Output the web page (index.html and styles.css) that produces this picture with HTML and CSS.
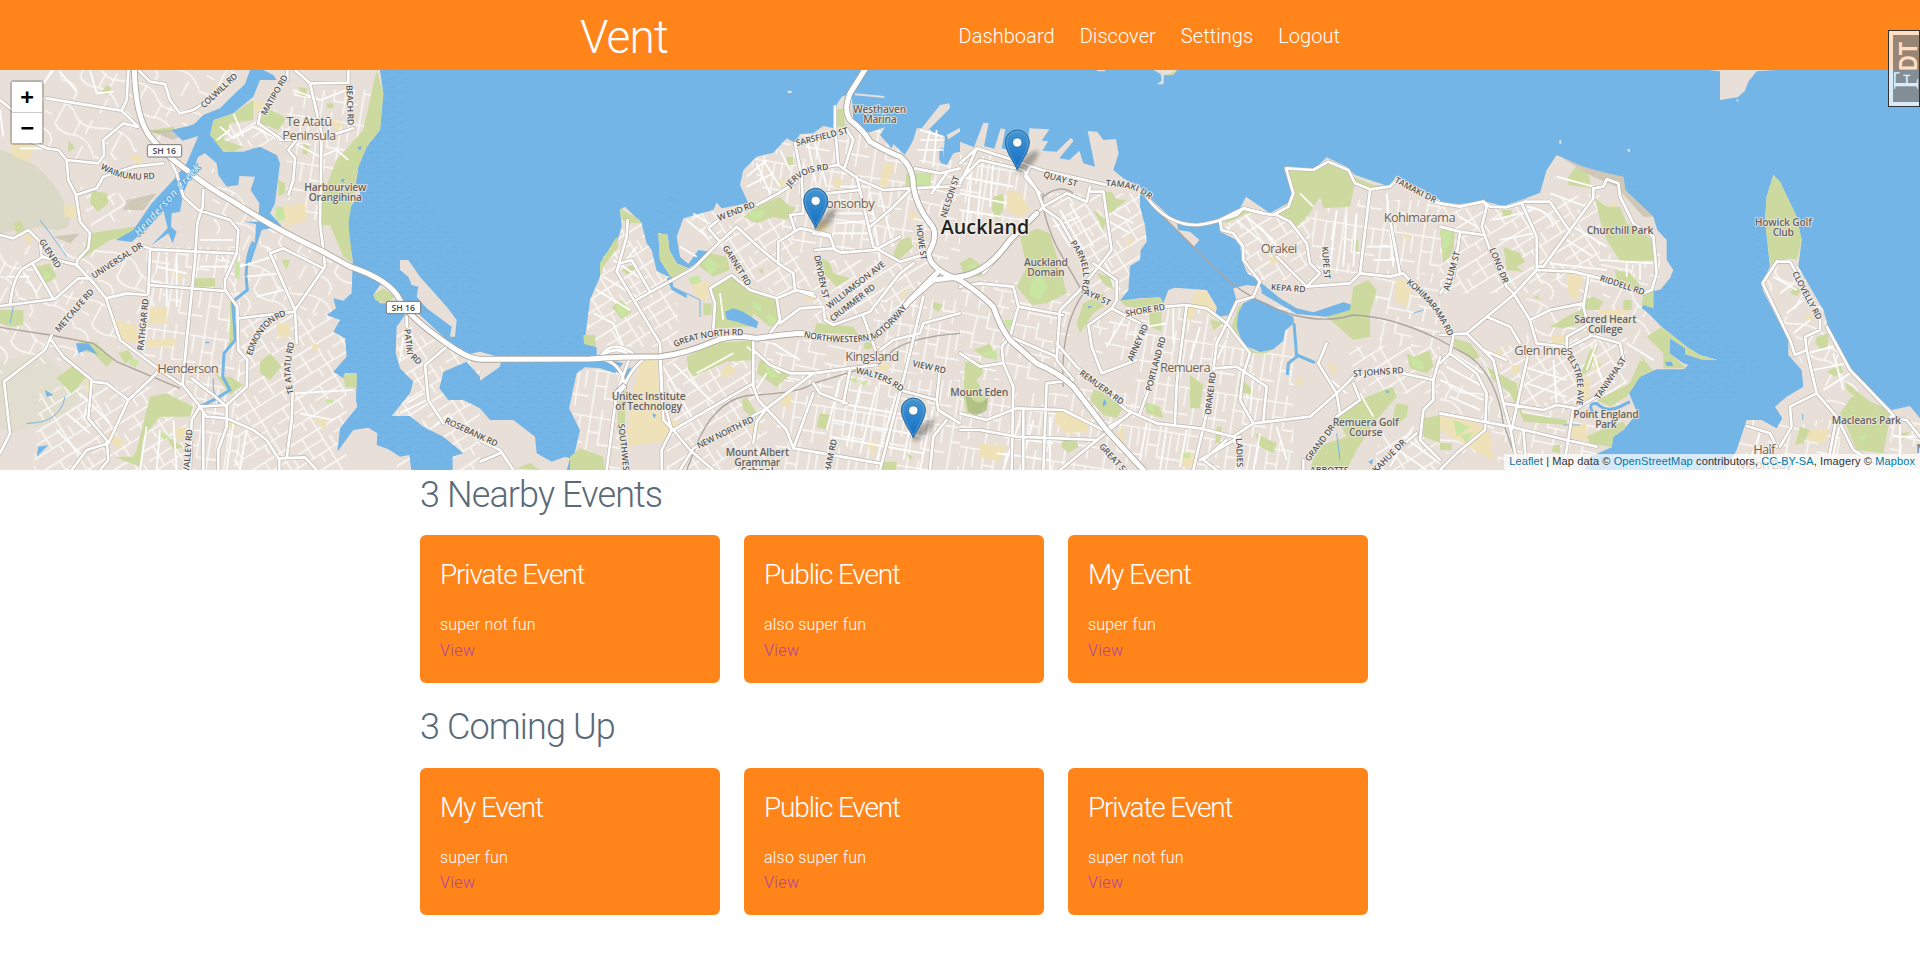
FILE: index.html
```html
<!DOCTYPE html>
<html lang="en">
<head>
<meta charset="utf-8">
<title>Vent</title>
<link rel="stylesheet" href="styles.css">
</head>
<body>
<header class="site-header">
  <div class="header-inner">
    <a class="brand">Vent</a>
    <nav class="nav"><a>Dashboard</a><a>Discover</a><a>Settings</a><a>Logout</a></nav>
  </div>
</header>

<section class="map">
<svg class="map-canvas" width="1920" height="400" viewBox="0 30 5760 1200">
<defs>
  <pattern id="pa" width="150" height="120" patternUnits="userSpaceOnUse" patternTransform="rotate(12)"><path class="lane" d="M0 20H95M60 20V120M0 75H60M95 0V50H150M60 98H150M120 50V98M20 75V120M130 98V120"/></pattern>
  <pattern id="pb" width="130" height="110" patternUnits="userSpaceOnUse" patternTransform="rotate(-32)"><path class="lane" d="M0 15H130M0 48H90M0 82H130M35 15V82M90 0V110M112 48V82M60 82V110"/></pattern>
  <pattern id="pc" width="120" height="140" patternUnits="userSpaceOnUse" patternTransform="rotate(9)"><path class="lane" d="M15 0V140M48 0V105M82 25V140M0 25H120M48 105H120M105 25V80M15 70H48"/></pattern>
  <pattern id="pd" width="190" height="160" patternUnits="userSpaceOnUse" patternTransform="rotate(28)"><path class="lane" d="M0 30Q60 10 90 40T190 30M45 22V90Q70 110 110 95T190 120M110 45V95M0 125Q40 110 60 140V160M140 30V75M150 112V160M0 70H25"/></pattern>
  <path id="l1" d="M0 0H1140V30L1150 100 1140 210 1100 260 1075 320 1068 370 1080 400 1045 450V520L1058 600 1055 700 1030 722 1000 715 1008 745 980 765 1020 780 1000 815 1035 835 1040 890 1000 935 1030 955 1035 940 1070 940 1068 1020 1072 1040 1020 1105 1012 1175 1060 1110 1105 1103 1132 1120 1130 1155 1165 1168 1200 1190 1228 1185 1235 1240H0Z
   M1140 675L1160 665 1185 690 1200 720 1260 765 1340 840 1390 885 1440 875V950L1400 905 1330 935 1318 985 1345 1020 1390 1020 1440 1045V1240H1358V1190L1390 1180 1330 1130 1270 1100 1230 1068 1175 1068 1230 1000 1240 965 1200 925 1187 880 1190 800 1215 765 1190 730 1140 730 1120 705Z
   M1200 600L1225 600 1260 650 1340 740 1370 780 1365 830 1350 830 1355 800 1280 745 1250 710 1255 680 1235 675 1225 650 1200 630Z"/>
  <path id="l2" d="M0 875L65 893 60 920 0 962Z M0 1045L30 1080 100 1080 165 1130 170 1180 215 1205 255 1190 270 1195 258 1240H0Z
   M270 1240L300 1110 267 1045 290 940 315 922 360 925 405 940 430 910 350 890 350 862 312 850 320 800 330 720 360 650 370 590 410 550 425 500 420 450 435 440 485 490 500 550 515 570 530 632 575 655 540 600 535 518 563 525 568 570 590 610 625 625 680 590 670 572 625 612 600 590 590 530 610 475 700 450 710 428 725 445 805 430 780 375 790 330 830 290 880 278 920 235 945 248 960 222 1000 220 1030 197 1060 205 1060 150 1085 110 1115 100 1120 180 1165 218 1215 202 1200 225 1235 265 1240 252 1275 285 1300 240 1310 205 1325 205 1380 135 1408 130 1410 145 1345 210 1395 230 1388 310 1400 316 1420 280 1440 275V1240Z
   M1125 100L1213 108V114L1125 106Z M923 92H935V99H923Z M1400 225L1440 203V215L1405 238Z"/>
  <path id="l3" d="M0 245L42 262 70 188 86 190 72 258 103 266 122 205 136 208 125 265 200 285 208 205 268 208 245 242 265 243 247 272 290 275 332 234 341 242 298 295 328 300 358 272 370 310 405 320 383 213 412 215 430 240 468 237 476 280 460 330 490 355 545 385 540 405 500 415 470 418 455 390 540 392 540 440 556 500 560 545 542 570 540 600 510 618 505 690 480 722 540 715 600 712 610 730 625 690 645 683 740 690 770 740 765 772 810 765 830 725 820 685 860 675 903 680 905 700 1010 762 1100 770 1220 748 1150 727 1060 757 1010 745 960 715 900 665 862 640 845 600 840 545 780 515 778 485 832 460 858 410 930 460 990 425 998 400 975 325 1060 330 1100 292 1160 320 1185 345 1290 380 1305 352 1440 420V1240H0Z
   M565 410L650 488 655 510 690 515 718 540 700 562 615 475Z M580 30H652L632 46 612 45 610 73 590 73 605 62 602 42Z M412 30H435V34H412Z"/>
  <path id="l4" d="M0 430L60 432 130 423 190 438 250 418 300 398 320 330 350 285 430 320 500 340 550 350 556 390 640 470 652 510 680 540V600L700 630 690 655 660 690 640 692V745H610L665 800 740 860 780 885 832 900 790 900 735 882V865L690 835 688 880 730 910 745 915 730 928 650 928 600 950 567 1000 580 1030 592 1060 550 1110 520 1130 515 1162 450 1190 430 1240H0Z
   M850 1240L890 1170 920 1080 965 1080 1010 1105 1027 1075 1005 1040 1040 1010 1090 980 1085 930 1045 885V840L968 690 966 665 990 620 975 480 980 410 1000 345 1020 365 1070 470 1085 540 1075 620 1150 750 1170 820 1230 930 1355 1050 1410 1038 1440 1075V1240Z
   M805 30H1010L950 34 925 65 915 92 893 112 840 120V34Z M358 240L364 241V251H358Z M563 267H570V275H563Z M888 118L897 120 893 126Z"/>
  <clipPath id="c1"><use href="#l1"/></clipPath><clipPath id="c2"><use href="#l2"/></clipPath>
  <clipPath id="c3"><use href="#l3"/></clipPath><clipPath id="c4"><use href="#l4"/></clipPath>

  <g id="minor">
    <path d="M130 70L160 30M180 35L205 65 230 95M270 30L290 100 340 95M140 115Q240 130 365 150M40 120L130 120M0 150L10 230M60 265L130 265M660 200L700 235 760 200 840 240M650 240L690 210M700 160L730 230M880 90L960 120 1040 90M885 250L960 290 1010 270 1045 300M470 620L560 640M500 590V740M530 590V740M600 540H700M600 620H690M720 620L820 590M740 650L840 640M770 710L850 690M800 560L880 730M60 620L110 700M20 650H90M240 1000L330 1090M280 970L250 1080M200 1060L270 1120M170 1110L250 1190M440 1100L420 1230M480 1110L470 1230M520 1080L530 1230M700 1090L680 1230M740 1110L720 1230M880 1000L1060 990M900 1060L1000 1080M1220 1030L1270 1000M1200 1060L1280 1020M1210 830L1200 900M1300 1100L1350 1060"/>
    <path transform="translate(1440)" d="M370 650L470 710M350 690L450 750M400 600L490 660M340 760L400 790 430 860M470 560L410 640M620 480L680 530M640 460L700 500M600 560L650 590M830 310L870 400M850 300L900 380M800 350L860 300M800 380L880 340M900 270L930 330M980 230L1010 380M1000 230L1040 380M1080 380H1180M1050 430H1180M1060 460H1180M1070 490L1200 480M1060 520H1170M1170 400L1200 600M1200 400L1240 560M550 920L640 1080M580 910L700 1030M650 940L760 880M860 940L820 1000M1080 960L1040 1110M1140 980L1100 1160M1190 980L1140 1180M1250 1000L1190 1200M1310 1000L1270 1200M1360 1040L1320 1230M1080 1030L1360 1080M1060 1080L1340 1130M1050 1130L1330 1180M1320 210L1390 230M1320 240H1390M1310 270H1390M1350 210L1330 310M1370 210L1360 320M720 700L730 780M800 860L900 940M880 850L960 900"/>
    <path transform="translate(2880)" d="M40 280L20 500M70 290L50 500M100 300L90 440M0 350L160 380M0 400L140 430M0 450L120 470M270 460L330 560M300 450L370 570M330 430L400 560M280 500L360 470M460 460L520 490M440 480L510 520M430 600L480 690M500 760L440 860M560 800L620 790M680 760L660 900M640 740V850M720 800L690 900M800 840L770 900M800 500L860 580M830 480L920 560M860 470L940 540M900 500L980 590M1020 400L1060 440M1130 450L1110 620M1160 460L1150 620M1190 460L1180 620M1220 560H1300M1240 600H1310M1280 400L1300 620M180 1080L130 1230M220 1080L180 1230M270 1070V1230M130 1130L280 1150M110 1180L270 1200M560 1090L540 1200M620 1100L600 1230M680 1110L660 1220M900 1120L880 1230M950 1100L980 1200M1200 1000L1240 1070M1300 1160L1400 1230M1330 1130L1440 1210M1360 1100L1290 1220M1100 950L1160 1000M880 940L870 1060"/>
    <path transform="translate(4320)" d="M60 470L110 500M160 480L280 450M180 540L280 520M260 440Q330 450 340 500M330 400L440 440M350 350L460 380M380 540L460 590M400 500L500 560M330 610L500 630M480 600L640 610M560 610V650M600 610V660M40 880L130 940M20 920L130 980M0 960L130 1020M30 1010L120 1050M250 920L380 960M260 970L380 1010M340 900L350 1030M470 850L440 930M460 880L500 1000M560 850L640 900M1000 650L1070 690M1020 700L1060 670M1040 760L1090 720M1060 820L1110 780M1100 880L1180 860M1120 930L1220 910M1180 880L1210 990M1380 1080V1220M1360 1130H1430M960 1120L920 1230M1200 1090L1170 1230M1150 990L1230 940"/>
  </g>
  <g id="major">
    <path d="M0 120L50 160M60 230L140 265 175 270 200 300 295 310 312 285 310 240 370 190 410 200M140 115L365 152 415 200M385 30L380 120 365 152M415 30L450 65 495 72 510 120 540 160 580 150 610 130M200 300L205 360 228 405 240 485 270 520 265 565 232 600 230 620M228 405L290 385 310 350 400 320 490 310M505 290L530 340 550 410 595 450 690 480 715 510 710 580 675 660 675 690 712 740 715 870 742 900 740 980 680 1035M610 390L608 440 592 490 585 600 575 700 560 840 548 970M420 555L455 568 700 580M450 570L445 700M0 738L165 717 235 655 270 655 318 715 360 840 420 885 480 930 545 975M318 715L380 700 440 705M448 675L675 693M0 525L40 535 85 510 120 545 125 590 230 615 290 680M30 735Q40 650 70 625L130 590M100 615L160 717M155 825L135 870 12 965 30 1120 0 1180M150 835L190 890 275 960 265 1075 320 1140 325 1200 300 1230M275 965L320 970 385 1020M480 930L385 1020 325 1150 260 1170 215 1230M545 970L600 1040 620 1070 680 1075 760 1110 800 1140 838 1200V1230M575 955L640 1005 680 1040V1100L655 1170V1230M680 1035L600 1040 575 1080 570 1230M610 1060V1230M838 1195L915 1192 950 1230M878 995L875 1080 860 1195M885 30L930 70 1045 68V30M930 70L965 220 960 490 970 570M965 235L1060 205M840 235L775 190 780 160M840 240L890 240 865 270 885 295 880 360 865 405M810 580L850 565 900 590 970 625M970 570L975 620 885 750 810 580M885 750L890 850M885 755L715 775M862 30V60M1220 770V800M1275 915L1340 860 1380 870M1275 915L1285 1020 1330 1090"/>
    <path transform="translate(1440)" d="M0 1140L60 1170 100 1230M0 1205L60 1180M443 480L440 530 410 635 540 850 550 1080 580 1110 630 1170 700 1230M410 635L420 610 455 600 510 695M465 722L640 625 720 545 770 500 840 565 895 610 940 640 945 690 1000 700M720 545L685 505 715 480M830 435L895 400 950 365M945 250L965 350 970 460 930 465 945 510M895 610V545L960 505 1010 515 1050 525M1000 520L1050 530 1065 570 1085 578 1185 570 1260 530M1005 570L1060 565M1065 140V200L1075 315 1040 320M1075 315L1140 360 1210 390 1290 385M1095 200L1120 240 1095 320M1040 400L1140 390M1130 350L1180 560 1260 605 1345 580M1170 500L1230 450 1290 390M1290 385L1440 378M1305 325L1380 340 1440 325M700 805L705 730 690 685 755 645 810 690 890 715 900 780 870 820M890 715L950 690 1005 710M820 840V980L835 1020 920 1110 940 1165 1200 1210M540 890L545 1000 575 1110 545 1170V1230M580 1110L820 970M820 870L870 915 930 940 1000 940 1110 925 1190 915M1000 940L860 1045 640 1165 600 1230M860 1045L830 1085 820 1150M940 1165L1000 1000M1190 880L1150 770M900 790L960 745 1030 740 1035 780 1060 795 1170 755 1260 640 1300 610M1200 870L1240 840 1320 820 1330 790 1440 760M1330 710L1280 920 1200 1230M1110 930L1090 1030M1260 990L1370 1020 1375 1050 1440 1090M1380 930L1370 1020M1400 1080L1360 1130 1350 1230M1000 970L1020 1000 1100 1030M410 1000L380 1230M1355 400L1400 340"/>
    <path transform="translate(2880)" d="M0 310L50 265 190 310 245 330 440 375M50 265L30 310 0 370M0 360L60 300 190 330 230 390 250 440 160 540 70 640M210 320L195 350 240 400M250 440L320 400 380 425 390 380M250 445L300 480 340 550M390 395H430L455 570 360 690 300 750 290 900 340 960M400 610L470 660 470 720 455 745 385 795 395 860 425 940M455 745L540 790M425 940L530 900M0 680L60 670 160 680 175 740 150 830 125 860 130 910 160 980 155 1230M175 740L310 765M150 830L290 890M0 880L60 920 125 910M0 1060L80 1080 170 1045 310 1050 430 1110 500 1070M0 1110L60 1110 170 1130 410 1140M290 850L350 920 500 1050 590 1090 720 1105 820 1130 880 1090 1050 1070 1130 1000 1200 930M340 960L260 970 250 1230M510 1060L300 1230M190 1050V1230M540 1060L580 950M615 740L680 735 740 745 800 790 870 880 850 940 840 1020 880 1090M680 735L650 970 645 1090M800 790L770 850 760 930M760 925L830 920 920 980 910 1080M740 1060L700 1230M825 1130V1150M800 790L830 725 880 710 900 665 850 600V560L820 520 785 510 780 480 850 445 910 460M950 465L990 485 1040 550 1050 610 1080 640 1040 680M1040 680L1170 670 1200 640 1290 650 1330 640 1440 760M1230 390L1200 640M1040 680L950 590M1290 480L1320 640M1330 940L1420 960 1440 890M1420 960V1020L1390 1050 1380 1140 1440 1200M1100 850L1075 910 1130 1000 1140 1060M1180 970L1200 1020 1130 1070M840 1130L720 1200M1030 1200V1230M1370 1120L1240 1230M800 1140L730 1200 770 1230"/>
    <path transform="translate(4320)" d="M0 500L60 515 130 525M140 440L125 500 150 570 200 680 220 700 270 780 290 850 370 860M0 700L40 650 60 520M245 430L290 530V630L220 705 80 820 0 825M140 440L130 425M255 425H330L390 515M460 385L490 380 500 358 535 370 540 410 580 490 640 530 650 640 635 690 610 700M460 385V415L310 620H290M290 630L400 635 480 655M445 655L430 740 450 820M270 780L330 750 430 730M80 820L160 900 190 1030 210 1100 235 1230M80 820L130 870 200 900M140 770L210 800 240 850M265 880L215 1110M0 910L30 880 40 830M30 880L110 940 140 1000 135 1110 50 1180 0 1230M190 1030L310 1050 350 1035 410 1045 470 1010M0 1060L210 1100 380 1140 470 1160M400 1045L370 1230M380 865V830L450 790 450 825 540 850 550 900M390 860L450 830M250 1110L260 1230M1010 605H1050L1070 640M1010 605L968 670 1050 840 1065 885 1100 870 1095 830 1140 810V780M1100 870L1130 1000 1190 1070 1240 1170 1290 1200 1440 1230M1130 1000L1050 1040 1055 1100 1020 1160M920 1098L990 1120 1010 1160M1190 1070L1160 1230M1350 1070L1400 1080 1440 1130M1160 800L1230 930 1360 1065"/>
  </g>
  <g id="coast">
    <path transform="translate(2880)" d="M560 410Q620 495 710 495 750 492 830 465L850 445 910 460 940 465 985 440 1000 400 978 325 1060 330 1105 305 1165 330 1185 370 1230 388 1290 380 1305 365M1420 425L1440 430"/><path transform="translate(4320)" d="M0 430L60 440 130 425 150 440 200 442 255 425"/>
  </g>
  <g id="motor">
    <path d="M403 20Q405 170 450 230 490 280 560 330 620 380 700 425 830 510 960 570L1050 620Q1170 660 1200 720 1225 770 1340 850 1400 895 1440 898L1770 897Q1860 890 1980 890 2060 880 2140 845 2200 820 2270 835 2340 825 2400 820L2500 838 2620 832Q2680 780 2740 710L2810 640"/>
    <path transform="translate(1440)" d="M1160 20L1110 100Q1090 150 1110 180 1150 210 1170 245 1220 275 1260 290 1300 320 1300 380 1310 440 1350 490 1380 520 1345 580 1350 630 1440 660 1500 700 1540 740 1560 800 1590 840L1670 910Q1740 940 1780 980L1880 1110 1990 1230"/>
    <path transform="translate(1440)" d="M430 980L410 1000M1290 720L1360 660 1440 650Q1520 640 1590 540L1670 460"/>
  </g>
  <path id="ramps" d="M1790 895Q1870 900 1875 990M1800 890Q1855 850 1890 890L1850 1000M1940 892Q1890 920 1860 1010M1800 890Q1840 830 1910 890"/>
  <g id="pin">
    <ellipse rx="15" ry="5" transform="translate(10 -8) rotate(-45)" fill="#000" opacity=".3" filter="url(#soft)"/>
    <path d="M0 0C-2-6-12-18-12-28A12 12 0 0 1 12-28C12-18 2-6 0 0Z" fill="url(#pinfill)" stroke="#2e6c97" stroke-width="1"/>
    <path d="M-10.5-28A10.5 10.5 0 0 1 10.5-28C10.5-20 3-9 0-3 -3-9-10.5-20-10.5-28Z" fill="none" stroke="#fff" stroke-opacity=".18"/>
    <circle cy="-27.5" r="4.6" fill="#fff" stroke="#2e6c97" stroke-width=".7"/>
  </g>
  <linearGradient id="pinfill" x2="0" y2="1"><stop stop-color="#4595d1"/><stop offset="1" stop-color="#126fc6"/></linearGradient>
  <filter id="soft" x="-50%" y="-100%" width="200%" height="300%"><feGaussianBlur stdDeviation="2"/></filter>
  <pattern id="wave" width="46" height="30" patternUnits="userSpaceOnUse"><path d="M2 8h14M24 22h14M30 6l5-3 5 3" stroke="#6aacdf" stroke-width="2" fill="none"/></pattern>
  <path id="t1" d="M300 325Q370 370 470 355"/><path id="t2" d="M755 888Q790 780 868 765"/><path id="t3" d="M882 1000Q860 930 885 845"/>
  <path id="t4" d="M2410 832Q2550 860 2630 835 2690 790 2735 724"/><path id="t5" d="M3317 378Q3410 380 3448 420"/><path id="t6" d="M3210 548Q3270 630 3240 700"/>
  <path id="t7" d="M4182 365Q4240 400 4315 434"/><path id="t8" d="M4798 662Q4870 685 4942 710"/><path id="t9" d="M2370 383Q2410 330 2490 330"/><path id="t10" d="M2025 862Q2110 822 2236 826"/>
  <path id="t12" d="M2566 940Q2660 955 2712 1004"/><path id="t13" d="M4218 670Q4310 740 4348 838"/><path id="t14" d="M4700 893Q4745 950 4728 1042"/>
</defs>

<rect y="0" width="5760" height="1260" fill="#73b5e6"/>
<path fill="url(#wave)" d="M1140 30H1230L1200 350 1440 600V1230H1000V400ZM1440 860L1780 810 1790 1230H1440ZM1940 480L2040 370 2030 560 1990 640ZM3400 560L3640 640 3740 560 3700 780 3400 730ZM4740 365L4920 370 5040 720 5290 920 5180 1030 4900 990 4960 700ZM5260 490H5310V660H5260Z"/>
<g fill="#e8e0d8"><use href="#l1"/><use href="#l2" x="1440"/><use href="#l3" x="2880"/><use href="#l4" x="4320"/></g>

<g clip-path="url(#c1)">
  <path fill="#d4d5c0" opacity=".7" d="M0 270Q130 300 190 420T120 500L0 520Z"/><path fill="#dddcc9" opacity=".6" d="M0 900L130 880 260 1000 180 1080 40 1120 0 1100Z"/>
  <path fill="url(#pd)" d="M0 560L420 540 500 700 380 860 0 940ZM130 30H740L560 210 300 320 120 260ZM600 280L780 480 1060 640 1040 760 700 760Z"/>
  <path fill="url(#pb)" d="M120 980H560V1230H100ZM720 760H1040V1230H700ZM240 380L460 420 280 520ZM640 150H860V260H650ZM1190 780L1440 900V1230H1190Z"/>
  <path fill="url(#pc)" d="M440 560H720V1230H560V900H430ZM860 90H1140V480H860Z"/>
</g>
<g transform="translate(1440)"><g clip-path="url(#c2)">
  <path fill="url(#pb)" d="M320 480H570L600 860H320ZM560 900L820 860 880 1230H560ZM600 440L890 420 1000 700 900 720 700 560ZM1000 600L1350 600 1300 740 1000 800Z"/>
  <path fill="url(#pc)" d="M780 240L1300 200V580H940ZM900 960H1440V1230H880ZM1180 720H1440V940H1180ZM280 930H420V1230H280Z"/>
  <path fill="url(#pa)" d="M840 840H1180V960H840ZM1300 300H1440V600H1300Z"/></g></g>
<g transform="translate(2880)"><g clip-path="url(#c3)">
  <path fill="url(#pc)" d="M0 270H200V520H0ZM500 740H1000V1230H560ZM1050 420H1440V640H1060ZM0 1000H540V1230H0Z"/>
  <path fill="url(#pb)" d="M260 400H560V700H400ZM790 460H1050V660H860ZM1160 860H1440V1000H1200ZM1260 1120H1440V1230H1240Z"/>
  <path fill="url(#pa)" d="M0 660H330V960H0ZM400 760L560 780V900L400 900ZM340 900L560 1060 380 1060ZM1240 640H1440V860H1260Z"/></g></g>
<g transform="translate(4320)"><g clip-path="url(#c4)">
  <path fill="url(#pb)" d="M0 440H300V700H0ZM300 420L480 400V620L280 680ZM180 860L560 820V1040H180Z"/>
  <path fill="url(#pd)" d="M0 880H160V1180H0ZM260 640H640V860H260ZM960 620H1130L1300 1000 1180 1060 1080 900Z"/>
  <path fill="url(#pa)" d="M480 580H660V680H480ZM140 1040H480V1230H180ZM860 1080H1200V1230H860ZM1350 1070H1440V1230H1350Z"/></g></g>

<g class="sand">
  <path d="M30 240L115 235 85 305 40 290ZM190 435L230 440V475L195 470ZM385 290L430 285 420 315ZM750 120L800 130 770 160ZM345 780L420 800 415 850 360 840ZM450 740L500 745V790H445ZM430 840L530 835 520 860 440 860ZM845 440L915 430 920 480 860 500ZM830 790H870V830H835ZM520 630L550 650 530 670ZM250 960L275 965 265 995ZM330 1110L375 1150 360 1165 320 1140ZM510 1110L560 1100 550 1150ZM680 1080L710 1095 690 1110ZM935 850L960 855 945 880ZM635 75L670 80 650 100ZM940 1070L985 1080 970 1110ZM70 520L100 530 90 560ZM990 180L1030 190 1010 215Z"/>
  <path transform="translate(1440)" d="M480 900L530 870 540 1060 600 1090 560 1140 440 1160 450 1040ZM630 660L690 670 680 725 650 710ZM1210 310L1245 315 1215 385 1200 375ZM1065 350L1090 360 1080 390 1060 380ZM1005 490L1045 480 1040 520 1010 515ZM720 940L745 910 770 935 730 955ZM900 1010L935 1000 930 1045 905 1035ZM1195 915L1230 905 1225 930 1195 935ZM1270 690H1285L1260 725ZM1285 450L1315 470 1290 480ZM1160 1150L1190 1140 1180 1190ZM980 700H1000V725H975ZM810 1100L840 1080 830 1140ZM890 360L920 355 910 385Z"/>
  <path transform="translate(2880)" d="M290 1040L390 1080 380 1115 320 1120 285 1090ZM60 1150L140 1160 120 1205 60 1190ZM710 690L740 695 770 745 765 770 710 745 690 790 680 760ZM140 390L180 400 210 450 180 475 140 450ZM920 590L970 595 940 615ZM1310 660L1360 660 1340 740 1305 720ZM1100 910L1135 920 1120 945ZM500 530L520 540 505 560ZM490 1090L470 1130 490 1150ZM1010 950L1035 960 1010 980ZM1330 520L1355 530 1340 545ZM660 1175L700 1180V1220H670Z"/>
  <path transform="translate(4320)" d="M380 640L430 650 410 720 385 700ZM470 750L570 750 510 790ZM505 430L530 430 520 465ZM415 960L450 950 450 1010 415 1040ZM335 825H375V850H335ZM385 1100L440 1090 440 1145 390 1130ZM0 1070L60 1065 110 1090 150 1120 160 1200 120 1180 0 1110ZM470 890L485 920 460 935ZM1095 760L1120 765 1105 790ZM1105 1110L1170 1110 1150 1150 1100 1140ZM1250 1110L1285 1120 1265 1165 1240 1150ZM160 875L190 870 180 900ZM215 915H240V940H215Z"/>
</g>
<g class="park">
  <path d="M640 180L700 160 760 120 760 180 690 190 670 240 730 260 700 275 660 270 630 225ZM795 140L860 175 835 210 780 190ZM1130 30L1150 100 1140 210 1100 260 1075 320 1045 490 1058 610 1030 590 990 495H960L970 400 1010 300 1090 210ZM275 390L320 400 325 430 295 455 270 430ZM40 490L60 480 75 510 50 520ZM270 520L400 500 440 520 330 540 240 600ZM110 620L150 610 170 650 140 670ZM0 750H70V795L30 800 0 790ZM585 655H645V680H585ZM705 605H718V655H705ZM780 905L810 880 845 920 810 960 780 940ZM170 955L220 915 260 950 215 1000ZM690 720L708 750 700 850 680 870 690 830ZM410 1170L450 1010 500 1000 580 1040 570 1070 480 1070 430 1130 420 1220 340 1190 400 1190ZM500 1130L550 1160 520 1170ZM1030 945L1070 940V985L1035 980ZM1120 705L1150 685 1185 710 1160 730 1125 720ZM640 935L660 950 690 950 730 975 690 1005ZM895 80L920 85V110L900 105ZM910 250L930 260 920 285 908 280ZM355 880L385 870 400 895 375 910ZM835 360L855 370V400L835 410ZM240 840L290 850 340 900 320 920 280 880 230 870ZM320 75L335 85 320 105 305 95ZM205 240L225 265 205 275ZM450 210L520 200 530 215 460 220ZM980 130H1000V145H980ZM845 600L870 600 860 630ZM800 490L830 490 895 530 860 525Z"/>
  <path transform="translate(1440)" d="M420 445L480 480 482 490 450 490 425 480ZM410 530L415 560 370 620 360 650 360 610ZM535 518L563 525 568 570 590 610 625 625 575 655 540 600ZM425 720L455 755 425 778 395 740ZM310 825H345L348 860 312 852ZM425 630L455 615 465 625 440 645ZM650 600L690 580 740 590 750 630 700 650 660 620ZM690 685L755 645 820 700 890 715 900 790 870 800 820 760 810 800 705 805 705 740ZM620 890L700 850 820 840 815 900 740 905 640 950 625 930ZM790 470L830 440 900 410 930 440 950 440 920 480 880 470 830 490ZM840 895L930 945 890 980 830 940ZM1065 150L1090 145 1095 200H1065ZM1280 340L1355 340 1350 380 1275 380ZM1260 540L1290 530 1300 560 1250 605 1240 580ZM1020 590L1050 610 1060 640 1110 655 1070 680 1030 640ZM1010 790L1120 800 1135 825 1060 820 1000 820ZM785 1020L800 1010 830 1060 820 1075 790 1050ZM1020 1060L1055 1065 1040 1110 1010 1100ZM1155 845L1185 850 1170 870 1150 865ZM1360 725L1390 735 1375 755 1358 745ZM270 1190L300 1165 370 1190 375 1230H270ZM110 1225L150 1210 180 1230ZM920 290L940 290V315H920ZM1210 1205H1250V1230H1205ZM670 730H695V765H670ZM420 960L440 980 430 1180 410 1100ZM835 630L850 625 850 645ZM1280 1180L1300 1190 1290 1200Z"/>
  <path transform="translate(2880)" d="M180 530L230 505 270 520 300 620 320 700 260 730 215 735 170 680 200 620ZM100 410L130 400 130 450 110 480 95 450ZM435 395H455L470 418 500 420 450 460 438 440ZM480 722L600 712 610 730 560 745 500 740ZM370 730L430 700 430 740 400 760 360 820 350 790ZM565 755L605 745V815L570 800ZM400 990L460 1000 490 1040 470 1075 430 1065 390 1020ZM15 905L60 905 70 940 50 960 85 1030 60 1060 20 1060 10 1010ZM310 1130L350 1135 355 1160 325 1180 305 1160ZM690 945L730 975 720 1045 690 1045ZM975 325L1060 335 1105 305 1160 325 1185 370 1170 440 1090 445 1080 410 1050 460 1010 500 950 465 1000 410ZM1180 680L1225 660 1250 690 1230 760 1230 830 1180 840 1100 770 1170 750ZM1180 350L1240 375 1290 375 1240 388 1190 375ZM1270 990L1300 980 1310 1010 1240 1090 1190 1170 1160 1230 1050 1230 1070 1160 1160 1130 1130 1070 1200 1020ZM1310 1030L1345 1035 1340 1070 1305 1100 1300 1060ZM840 955L880 990 880 1005 835 995ZM1340 880L1360 890 1410 870 1420 920 1400 940 1350 925ZM885 1120L950 1150 940 1180 900 1160ZM750 780L800 785 760 810ZM835 740L850 730 830 800 850 855 890 875 970 840 920 880 880 880 830 830 815 800ZM1180 540H1195V575H1180ZM550 1025L600 1040 610 1075 560 1060ZM770 1100H785L780 1150H765ZM1390 1075L1440 1065V1150L1390 1130ZM400 450L440 480 430 510ZM0 610L30 590 75 625 60 650 10 640ZM40 870L90 850 110 900 70 890ZM410 640L450 650 460 690 430 670ZM780 480L850 450 910 458 860 460 800 490ZM620 45L652 30 640 45Z"/>
  <path transform="translate(4320)" d="M385 350L410 320 445 340 455 385 385 375ZM465 415L500 440 540 440 560 490 640 540V602H540L500 540 480 480ZM0 510L45 505 40 580 10 610ZM190 560L240 580 255 605 230 620 250 635 200 630ZM430 720L460 710 490 725 475 750 435 750ZM330 800L380 770 430 745V790L370 805ZM525 630L570 640 605 680 600 700 530 665ZM610 700L640 692V745L605 735ZM620 830L665 800 740 860 780 885 832 900 790 900 735 882V865L690 835 688 880 740 925 670 925 670 880ZM570 970L600 900 640 930 600 950 560 1010 510 1040 470 1020ZM40 835L90 850 120 890 100 900 45 860ZM140 920L230 970 250 1080 210 1000 160 960ZM480 1110L550 1085 560 1100 520 1130 515 1162 450 1150 440 1130ZM1000 345L1020 365 1070 470 1085 540 1070 600 1050 595 990 615 975 480 980 410ZM1060 680L1085 690 1070 708 1050 700ZM1130 830L1165 820 1165 855 1145 870 1125 850ZM1200 1060L1235 1010 1250 1010 1355 1050 1330 1180 1250 1170 1220 1100ZM1160 935L1200 915 1210 935 1185 950ZM1215 965L1310 1040 1280 1040 1220 990ZM1080 1100L1110 1110 1090 1150 1065 1155ZM185 450H215V470H190ZM450 870L475 855 450 930 420 950ZM245 1060L380 1080 380 1095 250 1085ZM340 1155L360 1155V1180L335 1175ZM600 885L630 920 620 930ZM0 1150H35V1170H0ZM280 710L295 705V720ZM1380 1120L1410 1115 1390 1140ZM550 720L575 720V750H550Z"/>
</g>
<g class="pitch">
  <path d="M825 440L850 440 855 480 830 485ZM130 630L155 650 135 660ZM705 605H718V655H705ZM475 1110L510 1130 490 1140ZM400 895L420 905 405 922 385 910ZM978 1018H998V1030H978Z"/>
  <path transform="translate(1440)" d="M625 655L655 645 665 665 635 675ZM1310 340L1350 345 1348 375 1310 372ZM670 610L690 595 720 620 690 645ZM820 725L845 735 840 755 820 745ZM855 770L870 760 895 785 870 795ZM405 740L430 725 450 755 425 772ZM800 460L850 450 850 470 820 480ZM1110 960L1130 950 1130 970ZM1140 965L1165 965 1150 978ZM850 905L895 950 870 955Z"/>
  <path transform="translate(2880)" d="M210 670L240 645 265 680 240 720 210 705ZM560 1040L580 1030 580 1060ZM60 880L110 870 110 900ZM130 780L160 780 145 810ZM1350 890L1390 905 1390 930 1360 920ZM670 1180H690V1195H670ZM20 620L50 610 55 640Z"/>
  <path transform="translate(4320)" d="M5 515L35 510 30 550 10 580ZM40 1080L90 1100 50 1130ZM60 1125L100 1115 80 1150ZM1255 1130L1280 1120 1270 1145ZM475 905L485 915 475 925Z"/>
</g>
<path class="hill" d="M440 210Q560 220 620 165L590 200 520 240ZM380 420L470 400 430 450 370 450ZM160 530L240 520 210 550ZM4680 290L4750 320 4820 340 4870 350 4876 390 4960 470 4930 470 4850 380 4780 350Z"/>
<path class="crater" d="M2895 1000L2905 1055Q2930 1075 2960 1050L2965 1010Q2930 1050 2905 1000Z"/>

<g class="water">
  <path d="M750 30L735 72 700 105 660 145 610 165 580 195 515 210 548 242 595 228 560 310 520 360 455 430 400 510 348 540 395 546 450 495 490 450 503 505 455 555 505 520 518 550 530 515 513 500 515 460 540 455 550 400 595 290 615 280 650 310 655 345 680 380 715 375 718 348 765 350 752 390 778 430 775 485 730 485 768 492 765 545 740 600 752 610 785 510 845 498 810 460 825 430 840 310 830 285 780 260 730 275 670 275 630 225 640 180 700 160 760 110 780 60 830 60 820 45 790 30Z"/>
  <path d="M228 850L265 850 295 885 260 870 235 880ZM135 990L160 1005 140 1010ZM115 1160L145 1155 110 1190ZM1072 262L1086 258 1080 272ZM1022 360L1034 355 1030 370ZM616 845H628V850H616Z"/>
  <path transform="translate(1440)" d="M735 755L760 745 790 755 835 785 830 805 800 795 770 785 740 778ZM560 655L575 650 580 680 620 700 620 715 575 690ZM380 925L430 935 455 920 440 960 420 940ZM655 570L690 575 650 610 625 612ZM516 1060L530 1065 522 1075ZM1378 270L1390 262 1388 315 1378 300Z"/>
  <path transform="translate(2880)" d="M850 730L880 715 920 730 1000 770 1002 790 975 812 970 842 940 868 900 876 850 855 830 800 835 760ZM428 1030L435 1018 440 1030 430 1040ZM384 738H394V744H384ZM1275 990L1290 995 1280 1000ZM1225 1205L1240 1198 1235 1215Z"/>
  <path transform="translate(4320)" d="M610 735L640 745 660 790 640 770 605 745ZM675 905L695 905 700 918 680 918Z"/>
</g>
<g class="stream">
  <path stroke-width="9" d="M760 545Q730 600 742 690L698 725 706 840 672 880 668 950 690 990 650 1015 600 1040M3882 790L3890 890 3865 910 3862 945M3890 885L3945 908M4780 1060Q4760 1030 4790 1030 4820 1060 4860 1040L4890 1025"/>
  <path stroke-width="3" d="M120 480Q180 560 200 590M80 1090Q180 1090 195 1010M40 740L30 790M2060 700L2100 720V770M4270 750L4240 760M5408 1062V1080M4010 1120L4020 1200M4690 1095L4740 1095M640 955V990L660 1040"/>
</g>
<g class="rail"><path d="M0 802L150 825 280 850 350 905 540 985M2060 1230L2100 1130Q2160 1010 2260 1005 2400 1000 2440 970L2640 910 2680 870Q2740 830 2880 820M3130 400Q3120 450 3170 560L3250 700Q3180 800 3190 980M3130 410Q3180 370 3220 400M3480 460L3650 630Q3740 720 3880 765 3980 790 4060 765 4180 770 4320 840L4410 890Q4490 950 4510 1090L4560 1230"/></g>

<use href="#minor" class="minor"/>
<g class="case"><use href="#major"/><use href="#coast"/></g>
<g class="face"><use href="#major"/><use href="#coast"/></g>
<use href="#ramps" class="case"/><use href="#ramps" class="face"/>
<use href="#motor" class="mcase"/><use href="#motor" class="mface"/>

<g class="shield"><rect x="442" y="254" width="103" height="37" rx="5"/><rect x="1159" y="724" width="103" height="37" rx="5"/></g>
<g class="shieldtext"><text x="493" y="281">SH 16</text><text x="1210" y="752">SH 16</text></g>

<g class="road">
  <text><textPath href="#t1" textLength="172">WAIMUMU RD</textPath></text><text><textPath href="#t2" textLength="166">EDMONTON RD</textPath></text><text><textPath href="#t3" textLength="154">TE ATATU RD</textPath></text>
  <text><textPath href="#t4" textLength="352">NORTHWESTERN MOTORWAY</textPath></text><text><textPath href="#t5" textLength="140">TAMAKI DR</textPath></text><text><textPath href="#t6" textLength="154">PARNELL RD</textPath></text><text><textPath href="#t7" textLength="138">TAMAKI DR</textPath></text><text><textPath href="#t8" textLength="140">RIDDELL RD</textPath></text><text><textPath href="#t9" textLength="132">JERVOIS RD</textPath></text><text><textPath href="#t10" textLength="210">GREAT NORTH RD</textPath></text><text><textPath href="#t12" textLength="150">WALTERS RD</textPath></text><text><textPath href="#t13" textLength="206">KOHIMARAMA RD</textPath></text><text><textPath href="#t14" textLength="150">ELSTREE AVE</textPath></text>
  <text transform="translate(612 146) rotate(-43)" textLength="140">COLWILL RD</text>
  <text transform="translate(797 168) rotate(-60)" textLength="135">MATIPO RD</text>
  <text transform="translate(1039 76) rotate(88)" textLength="120">BEACH RD</text>
  <text transform="translate(116 544) rotate(57)" textLength="98">GLEN RD</text>
  <text transform="translate(282 657) rotate(-33)" textLength="178">UNIVERSAL DR</text>
  <text transform="translate(177 818) rotate(-49)" textLength="162">METCALFE RD</text>
  <text transform="translate(430 872) rotate(-84)" textLength="156">RATHGAR RD</text>
  <text transform="translate(568 1238) rotate(-86)" textLength="130">VALLEY RD</text>
  <text transform="translate(1213 808) rotate(84)" textLength="78">PATIKI</text><text transform="translate(1230 893) rotate(42)" textLength="34">RD</text>
  <text transform="translate(1332 1088) rotate(25)" textLength="172">ROSEBANK RD</text>
  <text transform="translate(2390 258) rotate(-14)" textLength="160">SARSFIELD ST</text>
  <text transform="translate(2157 483) rotate(-21)" textLength="118">W END RD</text>
  <text transform="translate(2167 563) rotate(58)" textLength="138">GARNET RD</text>
  <text transform="translate(2442 588) rotate(78)" textLength="132">DRYDEN ST</text>
  <text transform="translate(2488 748) rotate(-38)" textLength="215">WILLIAMSON AVE</text>
  <text transform="translate(2498 786) rotate(-38)" textLength="165">CRUMMER RD</text>
  <text transform="translate(2838 475) rotate(-72)" textLength="130">NELSON ST</text>
  <text transform="translate(2748 494) rotate(82)" textLength="108">HOWE ST</text>
  <text transform="translate(2736 918) rotate(13)" textLength="102">VIEW RD</text>
  <text transform="translate(2096 1166) rotate(-26)" textLength="186">NEW NORTH RD</text>
  <text transform="translate(1855 1092) rotate(84)">SOUTHWESTERN</text>
  <text transform="translate(2490 1240) rotate(-78)">HAM RD</text>
  <text transform="translate(3128 350) rotate(17)" textLength="106">QUAY ST</text>
  <text transform="translate(3250 702) rotate(25)" textLength="85">AYR ST</text>
  <text transform="translate(3378 770) rotate(-10)" textLength="120">SHORE RD</text>
  <text transform="translate(3398 905) rotate(-66)" textLength="118">ARNEY RD</text>
  <text transform="translate(3454 995) rotate(-75)" textLength="168">PORTLAND RD</text>
  <text transform="translate(3236 943) rotate(36)" textLength="158">REMUERA RD</text>
  <text transform="translate(3632 1066) rotate(-83)" textLength="130">ORAKEI RD</text>
  <text transform="translate(3966 560) rotate(86)" textLength="98">KUPE ST</text>
  <text transform="translate(3812 690) rotate(4)" textLength="104">KEPA RD</text>
  <text transform="translate(4060 950) rotate(-4)" textLength="152">ST JOHNS RD</text>
  <text transform="translate(3296 1160) rotate(48)">GREAT SOUTH RD</text>
  <text transform="translate(3708 1135) rotate(88)">LADIES MILE</text>
  <text transform="translate(3928 1206) rotate(-53)" textLength="130">GRAND DR</text>
  <text transform="translate(4128 1240) rotate(-45)">KAHUE DR</text>
  <text x="3930" y="1240">ABBOTTS</text>
  <text transform="translate(4347 694) rotate(-74)" textLength="122">ALLUM ST</text>
  <text transform="translate(4468 568) rotate(68)" textLength="112">LONG DR</text>
  <text transform="translate(4798 1020) rotate(-56)" textLength="146">TANIWHA ST</text>
  <text transform="translate(5376 640) rotate(62)" textLength="160">CLOVELLY RD</text>
</g>
<text class="creek" transform="translate(417 530) rotate(-48)" textLength="278">Henderson Creek</text>
<g class="poi">
  <text x="1006" y="393" textLength="186">Harbourview</text><text x="1006" y="422" textLength="160">Orangihina</text>
  <text x="2639" y="160" textLength="160">Westhaven</text><text x="2640" y="189" textLength="100">Marina</text>
  <text x="1946" y="1020" textLength="222">Unitec Institute</text><text x="1946" y="1049" textLength="200">of Technology</text>
  <text x="2272" y="1188" textLength="190">Mount Albert</text><text x="2272" y="1217" textLength="138">Grammar</text><text x="2272" y="1246">School</text>
  <text x="2938" y="1008" textLength="174">Mount Eden</text><text x="3138" y="618" textLength="132">Auckland</text><text x="3138" y="647" textLength="112">Domain</text>
  <text x="4097" y="1098" textLength="198">Remuera Golf</text><text x="4097" y="1127" textLength="100">Course</text>
  <text x="4860" y="521" textLength="200">Churchill Park</text><text x="4816" y="789" textLength="186">Sacred Heart</text><text x="4816" y="818" textLength="104">College</text>
  <text x="4818" y="1075" textLength="196">Point England</text><text x="4818" y="1104" textLength="64">Park</text>
  <text x="5350" y="498" textLength="172">Howick Golf</text><text x="5350" y="527" textLength="64">Club</text><text x="5599" y="1093" textLength="208">Macleans Park</text>
</g>
<g class="place">
  <text x="928" y="198" textLength="138">Te Atatū</text><text x="928" y="241" textLength="162">Peninsula</text><text x="564" y="940" textLength="184">Henderson</text>
  <text x="2540" y="443" textLength="168">Ponsonby</text><text x="2617" y="904" textLength="162">Kingsland</text><text x="3837" y="580" textLength="110">Orakei</text>
  <text x="3556" y="936" textLength="152">Remuera</text><text x="4259" y="487" textLength="216">Kohimarama</text><text x="4631" y="886" textLength="176">Glen Innes</text>
  <text x="5293" y="1183" textLength="66">Half</text><text x="5293" y="1226" textLength="164">Moon Bay</text><text x="5782" y="1178">Mel</text>
</g>
<text class="city" x="2955" y="521" textLength="266">Auckland</text>
<g transform="translate(2447 505) scale(3)"><use href="#pin"/></g>
<g transform="translate(2740 1134) scale(3)"><use href="#pin"/></g>
<g transform="translate(3052 330) scale(3)"><use href="#pin"/></g>
</svg>
  <div class="zoom"><a>+</a><a>−</a></div>
  <div class="credit"><a>Leaflet</a> | Map data © <a>OpenStreetMap</a> contributors, <a>CC-BY-SA</a>, Imagery © <a>Mapbox</a></div>
</section>

<main class="events">
  <h2>3 Nearby Events</h2>
  <div class="cards">
    <article class="card"><h3>Private Event</h3><p>super not fun</p><a>View</a></article>
    <article class="card"><h3>Public Event</h3><p>also super fun</p><a>View</a></article>
    <article class="card"><h3>My Event</h3><p>super fun</p><a>View</a></article>
  </div>
  <h2 class="upcoming">3 Coming Up</h2>
  <div class="cards short">
    <article class="card"><h3>My Event</h3><p>super fun</p><a>View</a></article>
    <article class="card"><h3>Public Event</h3><p>also super fun</p><a>View</a></article>
    <article class="card"><h3>Private Event</h3><p>super not fun</p><a>View</a></article>
  </div>
</main>
<aside class="fdt">
  <svg class="fdt-inner" width="26" height="67" viewBox="0 0 26 67">
    <text class="fdt-f" transform="translate(25 55) rotate(-90)" textLength="19" lengthAdjust="spacingAndGlyphs">F</text>
    <text class="fdt-dt" transform="translate(24 36) rotate(-90)" textLength="29" lengthAdjust="spacingAndGlyphs">DT</text>
  </svg>
</aside>
</body>
</html>
```
FILE: styles.css
```css
* { box-sizing: border-box; }
body { margin: 0; background: #fff; font-family: Roboto, "Liberation Sans", sans-serif; font-weight: 300; overflow: hidden; }
.site-header { height: 70px; background: #ff851b; color: #fff; }
.header-inner { width: 760px; height: 70px; margin: 0 auto; display: flex; justify-content: space-between; align-items: center; }
.brand { font-size: 46px; line-height: 70px; letter-spacing: -.8px; padding-top: 3px; }
.nav { display: flex; gap: 25px; font-size: 20px; line-height: 70px; letter-spacing: .06px; padding-top: 2px; }

.map { position: relative; height: 400px; overflow: hidden; }
.map-canvas { display: block; }
.lane { fill: none; stroke: #fff; stroke-width: 4; stroke-opacity: .85; }
.sand { fill: #efe2b8; }
.park { fill: #cdda9f; }
.pitch { fill: #c8e6a2; }
.hill { fill: #b9b59c; opacity: .55; }
.crater { fill: #a5b578; opacity: .7; }
.water { fill: #73b5e6; }
.stream { fill: none; stroke: #73b5e6; }
.rail { fill: none; stroke: #aaa59f; stroke-width: 4; }
.minor { fill: none; stroke: #fff; stroke-width: 5; }
.case, .face, .mcase, .mface { fill: none; stroke-linejoin: round; stroke-linecap: round; }
.case { stroke: #bdb6af; stroke-width: 12; }
.face { stroke: #fff; stroke-width: 8; }
.mcase { stroke: #aaa49e; stroke-width: 20; }
.mface { stroke: #fff; stroke-width: 15; }
.shield { fill: #fff; stroke: #777; stroke-width: 3; }
.map-canvas text { font-family: "Open Sans", "Noto Sans", sans-serif; paint-order: stroke; stroke-linejoin: round; }
.shieldtext text { font-size: 26px; font-weight: 600; fill: #444; text-anchor: middle; }
.road text { font-size: 26px; font-weight: 600; fill: #555; stroke: #f5f1ed; stroke-width: 5; }
.map-canvas .creek { font-size: 32px; font-weight: 600; font-style: italic; fill: #d3ecfc; stroke: #4f9bdb; stroke-width: 4; }
.poi text { font-size: 31px; font-weight: 600; fill: #636363; stroke: #ece6dd; stroke-width: 5; text-anchor: middle; }
.place text { font-size: 39px; font-weight: 400; fill: #716354; stroke: #f1ebe4; stroke-width: 6; text-anchor: middle; }
.map-canvas .city { font-size: 59px; font-weight: 600; fill: #222; stroke: #f4efe9; stroke-width: 7; text-anchor: middle; }

.zoom { position: absolute; left: 10px; top: 10px; border: 2px solid rgba(0,0,0,.2); border-radius: 4px; background-clip: padding-box; }
.zoom a { display: block; width: 30px; height: 30px; background: #fff; text-align: center; font: bold 22px/30px "DejaVu Sans Mono", monospace; color: #000; }
.zoom a:first-child { height: 31px; border-bottom: 1px solid #ccc; }
.credit { position: absolute; right: 0; bottom: 0; height: 16px; padding: 0 5px; background: rgba(255,255,255,.7); font: 400 11px/15px "Liberation Sans", Arial, sans-serif; letter-spacing: .115px; color: #333; white-space: nowrap; }
.credit a { color: #0078a8; }

.events { width: 1080px; margin: 0 auto; }
h2, h3, p { margin: 0; font-weight: 300; }
.events h2 { height: 65px; padding-top: 3px; font-size: 36px; line-height: 45px; letter-spacing: -.88px; color: #5a6a78; }
.events .upcoming { height: 85px; padding-top: 22px; }
.cards { display: flex; gap: 24px; }
.card { width: 300px; height: 148px; padding: 20px; border-radius: 6px; background: #ff851b; color: #fff; font-size: 16px; line-height: 26px; letter-spacing: .2px; }
.card h3 { font-size: 28px; line-height: 39px; height: 57px; letter-spacing: -1.15px; }
.card a { display: block; color: #ab42a4; letter-spacing: .4px; }
.short .card { height: 147px; line-height: 25px; }

.fdt { position: absolute; left: 1888px; top: 30px; width: 32px; height: 77px; padding: 4px 0 4px 4px; border: 1px solid #333; background: rgba(255,255,255,.73); }
.fdt-inner { display: block; background: rgba(0,0,0,.4); }
.fdt-f { font: 35px "Liberation Serif", serif; fill: #dcebf7; }
.fdt-dt { font: bold 25px "Liberation Sans", sans-serif; fill: #ffdfc4; }
```
